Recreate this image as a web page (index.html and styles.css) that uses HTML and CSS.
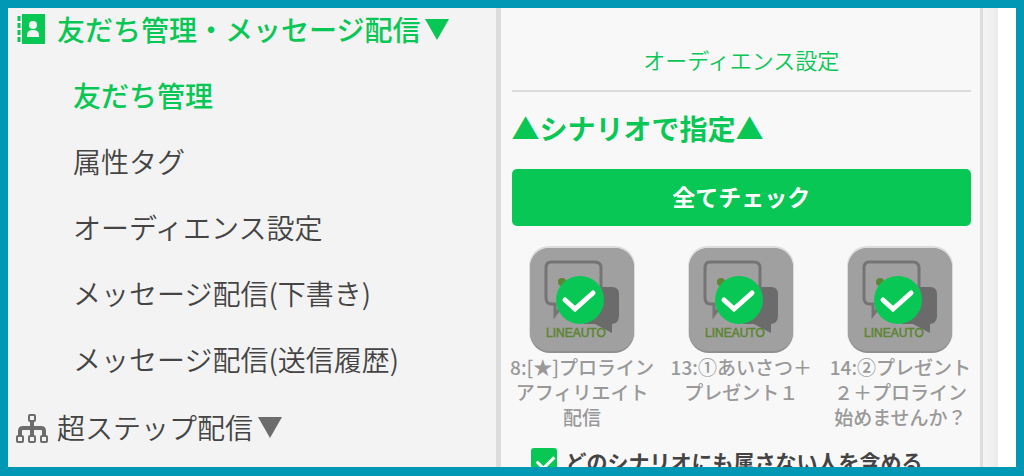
FILE: index.html
```
<!DOCTYPE html>
<html lang="ja">
<head>
    <meta charset="UTF-8">
    <meta name="viewport" content="width=device-width, initial-scale=1.0">
    <title>友だち管理</title>
    <link rel="stylesheet" href="styles.css">
</head>

<body>
<!--    ICONS-->
<svg class="sprite" aria-hidden="true">
    <symbol id="scenario" viewBox="0 0 106 107">
        <rect x="0" y="0" width="106" height="106" rx="20" fill="#dcdcdc"/>
        <rect x="1" y="2" width="104" height="105" rx="20" fill="#8f8f8f"/>
        <rect x="1" y="2" width="104" height="103" rx="19" fill="#a0a0a0"/>
        <path d="M72 41h11q7 0 7 7v22q0 7-7 8v9l-17-9H55V60z" fill="#6b6b6b"/>
        <path d="M22 16h44q6 0 6 6v29q0 7-6 7H34l-8 11V58h-3q-6 0-6-6V22q0-6 5-6z" fill="#a0a0a0" stroke="#747474" stroke-width="3"/>
        <circle cx="33" cy="36" r="4" fill="#5d8532"/>
        <text x="17" y="91" font-family="Liberation Sans, sans-serif" font-size="12" fill="#5d8532" stroke="#5d8532" stroke-width=".5">LINEAUTO</text>
        <circle cx="51" cy="54" r="24" fill="#09c755"/>
        <path d="M36 54l10 9 18-16" fill="none" stroke="#fff" stroke-width="5" stroke-linecap="round"/>
    </symbol>
</svg>

<nav class="sidebar">
    <a class="menu-title active" href="#">
        <svg class="menu-icon" viewBox="0 0 32 32">
            <path d="M6 1h23v30H6z" fill="#09c755"/>
            <path d="M3 3v28" stroke="#09c755" stroke-width="3" stroke-dasharray="5 2"/>
            <circle cx="17" cy="12" r="4" fill="#f3f3f3"/>
            <path d="M11 24v-2q0-5 6-5t6 5v2z" fill="#f3f3f3"/>
        </svg>
        <span>友だち管理・メッセージ配信</span>
        <svg class="arrow" viewBox="0 0 24 21"><path d="M0 0h24L12 21z" fill="currentColor"/></svg>
    </a>
    <ul class="submenu">
        <li><a class="active" href="#">友だち管理</a></li>
        <li><a href="#">属性タグ</a></li>
        <li><a href="#">オーディエンス設定</a></li>
        <li><a href="#">メッセージ配信(下書き)</a></li>
        <li><a href="#">メッセージ配信(送信履歴)</a></li>
    </ul>
    <a class="menu-title" href="#">
        <svg class="menu-icon" viewBox="0 0 32 32">
            <g fill="none" stroke="#6c6c6c">
                <path d="M4 24v-4q0-3 3-3h18q3 0 3 3v4M16 9v15" stroke-width="4"/>
                <g fill="#f3f3f3" stroke-width="2">
                    <rect x="13" y="4" width="6" height="6" rx="1"/>
                    <rect x="1" y="25" width="6" height="6" rx="1"/>
                    <rect x="13" y="25" width="6" height="6" rx="1"/>
                    <rect x="25" y="25" width="6" height="6" rx="1"/>
                </g>
            </g>
        </svg>
        <span>超ステップ配信</span>
        <svg class="arrow" viewBox="0 0 24 21"><path d="M0 0h24L12 21z" fill="#6c6c6c"/></svg>
    </a>
</nav>

<main>
    <a class="audience" href="#">オーディエンス設定</a>
    <h2>▲シナリオで指定▲</h2>
    <button class="check-all" type="button">全てチェック</button>
    <div class="scenarios">
        <button class="scenario" type="button" aria-pressed="true">
            <svg><use href="#scenario"/></svg>
            <span>8:[★]プロライン<br>アフィリエイト<br>配信</span>
        </button>
        <button class="scenario" type="button" aria-pressed="true">
            <svg><use href="#scenario"/></svg>
            <span>13:①あいさつ＋<br>プレゼント１</span>
        </button>
        <button class="scenario" type="button" aria-pressed="true">
            <svg><use href="#scenario"/></svg>
            <span>14:②プレゼント<br>２＋プロライン<br>始めませんか？</span>
        </button>
    </div>
    <div class="include">
        <input type="checkbox" id="include" checked>
        <label for="include">どのシナリオにも属さない人を含める</label>
    </div>
</main>
<div class="gutter"></div>
</body>
</html>
```
FILE: styles.css
```
:root {
    --frame: #0098b5;
    --green: #09c755;
    --line: #dcdcdc;
}
* {
    box-sizing: border-box;
}
body {
    margin: 0;
    height: 100vh;
    overflow: hidden;
    display: flex;
    border: 8px solid var(--frame);
    border-bottom-width: 9px;
    background: white;
    color: #444;
    font-family: "Noto Sans CJK JP", sans-serif;
}
a {
    color: inherit;
    text-decoration: none;
}
button {
    font-family: inherit;
    border: none;
    padding: 0;
    cursor: pointer;
}
.sprite {
    display: none;
}

/* sidebar */
.sidebar {
    flex: 1;
    min-width: 0;
    padding-left: 8px;
    background: #f3f3f3;
    font-size: 28px;
    font-weight: 350;
    white-space: nowrap;
}
.menu-title {
    display: flex;
    align-items: center;
    line-height: 42px;
}
.menu-icon {
    width: 32px;
    height: 32px;
    margin-right: 9px;
}
.arrow {
    width: 24px;
    height: 21px;
    margin-left: 5px;
}
.active {
    color: var(--green);
    font-weight: 500;
}
.submenu {
    margin: 12px 0 14px;
    padding: 0 0 0 57px;
    list-style: none;
    line-height: 66px;
}

/* scenario panel */
main {
    flex: 1;
    min-width: 0;
    border-left: 5px solid var(--line);
    border-right: 3px solid var(--line);
    background: #f8f8f8;
}
.audience {
    display: block;
    margin: 0 9px 0 11px;
    padding: 35px 0 14px;
    border-bottom: 2px solid var(--line);
    color: var(--green);
    font-size: 22px;
    font-weight: 350;
    line-height: 33px;
    text-align: center;
}
h2 {
    margin: 14px 11px 18px;
    color: var(--green);
    font-size: 28px;
    font-weight: 700;
    line-height: 45px;
}
.check-all {
    display: block;
    width: calc(100% - 20px);
    height: 57px;
    margin: 0 9px 20px 11px;
    padding-bottom: 4px;
    border-radius: 5px;
    background: var(--green);
    color: white;
    font-size: 23px;
    font-weight: 700;
}
.scenarios {
    display: grid;
    grid-template-columns: repeat(3, 1fr);
    padding-left: 2px;
}
.scenario {
    display: flex;
    flex-direction: column;
    align-items: center;
    background: none;
    color: #999;
    font-size: 19px;
    font-weight: 500;
    line-height: 25px;
    white-space: nowrap;
}
.scenario svg {
    width: 106px;
    height: 107px;
    margin-bottom: 1px;
}
.include {
    display: flex;
    align-items: center;
    gap: 9px;
    margin: 16px 30px;
    font-size: 21px;
    font-weight: 700;
    line-height: 32px;
    white-space: nowrap;
}
.include input {
    appearance: none;
    position: relative;
    width: 26px;
    height: 26px;
    margin: 0;
    border-radius: 3px;
    background: var(--green);
}
.include input:checked::before {
    content: "";
    position: absolute;
    left: 9px;
    top: 4px;
    width: 8px;
    height: 14px;
    border: solid white;
    border-width: 0 3px 3px 0;
    transform: rotate(45deg);
}
.gutter {
    width: 33px;
    background: linear-gradient(to right, #f5f5f5, #ebebeb 15px, white 15px);
}
```
